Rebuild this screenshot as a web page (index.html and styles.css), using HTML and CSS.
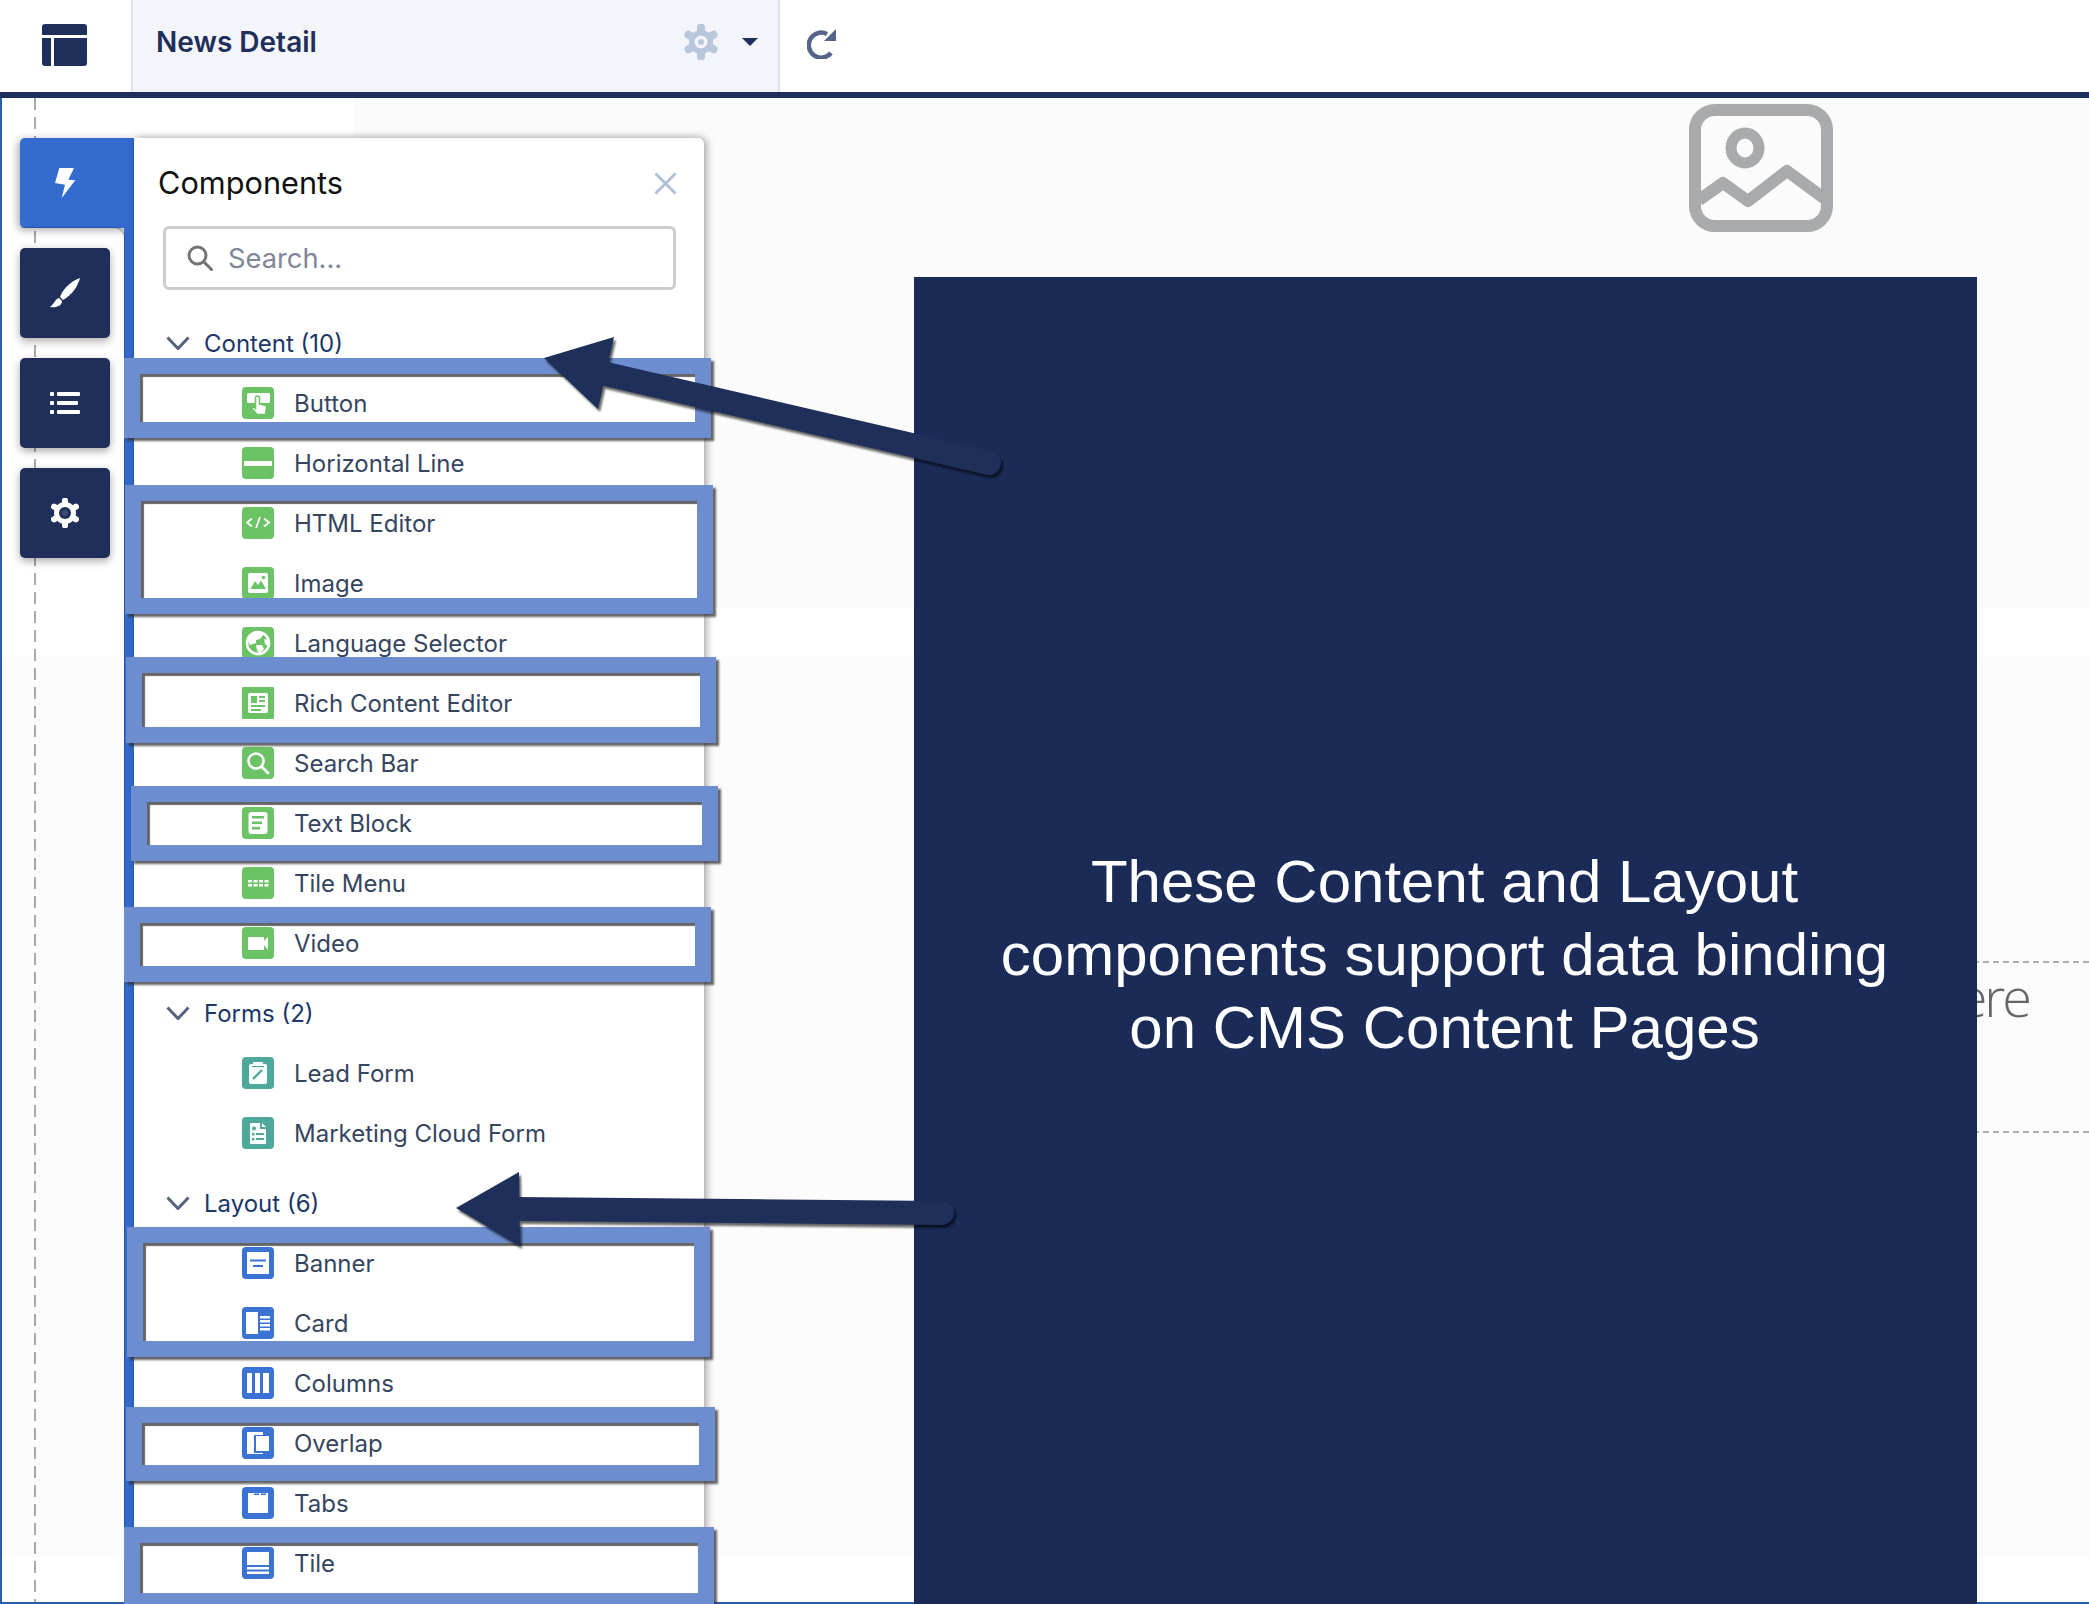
FILE: index.html
```html
<!DOCTYPE html>
<html lang="en">
<head>
<meta charset="utf-8">
<title>News Detail</title>
<link rel="stylesheet" href="styles.css">
</head>
<body>
<div class="page">
  <header class="topbar">
    <div class="brand">
      <svg class="logo" viewBox="0 0 45 42"><path d="M3 0H42A3 3 0 0 1 45 3V11H0V3A3 3 0 0 1 3 0ZM0 14H9V42H3A3 3 0 0 1 0 39ZM12 14H45V39A3 3 0 0 1 42 42H12Z"/></svg>
    </div>
    <div class="tab">
      <span class="tab-title">News Detail</span>
      <svg class="tab-gear" viewBox="-17 -18 34 36"><circle r="12" class="g-b"/><g class="g-t"><path d="M0 0V-14.500"/><path d="M0 0L12.500 -7.200"/><path d="M0 0L12.500 7.200"/><path d="M0 0V14.500"/><path d="M0 0L-12.500 7.200"/><path d="M0 0L-12.500 -7.200"/></g><circle r="6.500" class="g-h"/><circle r="3" class="g-b"/></svg>
      <span class="caret"></span>
    </div>
    <div class="refresh">
      <svg class="refresh-icon" viewBox="0 0 30 30"><path d="M24 24A12.500 12.500 0 1 1 20 5" class="r-s"/><path d="M29 0V12H17Z" class="r-f"/></svg>
    </div>
  </header>

  <main class="canvas">
    <section class="hero">
      <svg class="placeholder" viewBox="0 0 144 128"><rect x="6" y="6" width="132" height="116" rx="20"/><ellipse cx="56" cy="44" rx="14" ry="15"/><path d="M10 96L34 79L59 97L98 67L136 95"/></svg>
    </section>
    <div class="band"></div>
    <section class="body-region">
      <div class="dropzone"><span class="drop-text">ere</span></div>
    </section>
    <div class="band-end"></div>
  </main>

  <div class="builder">
    <nav class="rail">
      <div class="rail-active">
        <svg class="ic-bolt" viewBox="0 0 21 30"><path d="M4.300 0H19L13.300 11.700L20.300 12.300L6.700 30L10 16.700L0 15Z"/></svg>
      </div>
      <div class="rail-stack">
        <div class="rail-inner">
          <div class="rail-btn"><svg class="ic-brush" viewBox="0 0 30 30"><path d="M30 0C24 2 14 8 10 19L13 22C22 17 28 8 30 0Z"/><path d="M9 20C5 21 5 25 0 29C6 30 12 28 12 23Z"/></svg></div>
          <div class="rail-btn"><svg class="ic-list" viewBox="0 0 30 22"><rect y="0" width="4" height="4" rx="1"/><rect x="7" y="0" width="23" height="4" rx="1"/><rect y="9" width="4" height="4" rx="1"/><rect x="7" y="9" width="21" height="4" rx="1"/><rect y="18" width="4" height="4" rx="1"/><rect x="7" y="18" width="23" height="4" rx="1"/></svg></div>
          <div class="rail-btn"><svg class="ic-gear" viewBox="-14 -15 28 30"><circle r="11"/><g class="w-t"><path d="M0 0V-12.500"/><path d="M0 0L11 -6.300"/><path d="M0 0L11 6.300"/><path d="M0 0V12.500"/><path d="M0 0L-11 6.300"/><path d="M0 0L-11 -6.300"/></g><circle r="6" class="hole"/><circle r="3" class="core"/></svg></div>
        </div>
      </div>
    </nav>

    <aside class="panel">
      <div class="panel-head">
        <h2 class="panel-title">Components</h2>
        <svg class="close" viewBox="0 0 23 23"><path d="M1.500 1.500L21.500 21.500M21.500 1.500L1.500 21.500"/></svg>
      </div>
      <div class="search">
        <svg class="search-icon" viewBox="0 0 26 26"><circle cx="10.500" cy="10.500" r="8.500"/><path d="M17 17L24.500 24.500"/></svg>
        <span class="search-ph">Search...</span>
      </div>

      <div class="group">
        <svg class="chev" viewBox="0 0 24 14"><path d="M1.500 1.500L12 12.500L22.500 1.500"/></svg><span>Content (10)</span>
      </div>
      <ul class="items">
        <li class="item"><svg class="ico green" viewBox="0 0 32 32"><rect class="bg" width="32" height="32" rx="4"/><rect class="w" x="5" y="6" width="23" height="10" rx="1.500"/><path class="hand" d="M13.500 11a2 2 0 0 1 4 0v6l5.500 1.200a2 2 0 0 1 1.500 2.200L23.500 27.500H15L10 21.500l1.500-1.500 2 1.500Z"/></svg><span>Button</span></li>
        <li class="item"><svg class="ico green" viewBox="0 0 32 32"><rect class="bg" width="32" height="32" rx="4"/><rect class="w" x="2" y="14" width="28" height="5"/></svg><span>Horizontal Line</span></li>
        <li class="item"><svg class="ico green" viewBox="0 0 32 32"><rect class="bg" width="32" height="32" rx="4"/><path class="wl" d="M10 11.500L5 15.500L10 19.500M22 11.500L27 15.500L22 19.500M18 10L14 21"/></svg><span>HTML Editor</span></li>
        <li class="item"><svg class="ico green" viewBox="0 0 32 32"><rect class="bg" width="32" height="32" rx="4"/><rect class="w" x="6" y="6" width="20" height="20" rx="2"/><path class="g" d="M8.500 22L13 14L16 18L19 13.500L24 22Z"/><circle class="g" cx="21.500" cy="10.500" r="1.800"/></svg><span>Image</span></li>
        <li class="item"><svg class="ico green" viewBox="0 0 32 32"><rect class="bg" width="32" height="32" rx="4"/><circle class="wl2" cx="16" cy="16" r="11"/><path class="w" d="M9 8L16 5L22 7L18 12L14 13L14 16L8 18L6 14Z"/><path class="w" d="M14 18L20 18L22 22L17 27L15 23Z"/><path class="w" d="M22 12L27 13L27 20L23 17Z"/></svg><span>Language Selector</span></li>
        <li class="item"><svg class="ico green" viewBox="0 0 32 32"><rect class="bg" width="32" height="32" rx="1"/><rect class="w" x="6" y="6" width="20" height="20" rx="2"/><rect class="g" x="9" y="9" width="6" height="7"/><rect class="g" x="17" y="9" width="6" height="2"/><rect class="g" x="17" y="13" width="6" height="2"/><rect class="g" x="9" y="18" width="14" height="2"/><rect class="g" x="9" y="22" width="10" height="2"/></svg><span>Rich Content Editor</span></li>
        <li class="item"><svg class="ico green" viewBox="0 0 32 32"><rect class="bg" width="32" height="32" rx="4"/><circle class="wl2" cx="14" cy="14" r="7.500"/><path class="wl2" d="M19.500 19.500L26 26"/></svg><span>Search Bar</span></li>
        <li class="item"><svg class="ico green" viewBox="0 0 32 32"><rect class="bg" width="32" height="32" rx="4"/><rect class="w" x="6.500" y="5" width="19" height="22" rx="3"/><rect class="g" x="10" y="9" width="12" height="2.500"/><rect class="g" x="10" y="14.500" width="10" height="2.500"/><rect class="g" x="10" y="20" width="8" height="2.500"/></svg><span>Text Block</span></li>
        <li class="item"><svg class="ico green" viewBox="0 0 32 32"><rect class="bg" width="32" height="32" rx="4"/><path class="w" d="M6 13h4v2.500H6ZM11.500 13h4v2.500h-4ZM17 13h4v2.500h-4ZM22.500 13h4v2.500h-4ZM6 17h4v2.500H6ZM11.500 17h4v2.500h-4ZM17 17h4v2.500h-4ZM22.500 17h4v2.500h-4Z"/></svg><span>Tile Menu</span></li>
        <li class="item"><svg class="ico green" viewBox="0 0 32 32"><rect class="bg" width="32" height="32" rx="4"/><rect class="w" x="6" y="10" width="16" height="13" rx="1"/><path class="w" d="M20 16L26 10V23Z"/></svg><span>Video</span></li>
      </ul>

      <div class="group group-next">
        <svg class="chev" viewBox="0 0 24 14"><path d="M1.500 1.500L12 12.500L22.500 1.500"/></svg><span>Forms (2)</span>
      </div>
      <ul class="items">
        <li class="item"><svg class="ico teal" viewBox="0 0 32 32"><rect class="bg" width="32" height="32" rx="4"/><rect class="w" x="7" y="7" width="18" height="20" rx="2"/><rect class="w" x="11" y="5" width="10" height="4" rx="1"/><rect class="t" x="10" y="9" width="12" height="1.200"/><path class="tl" d="M11 22L20 13"/></svg><span>Lead Form</span></li>
        <li class="item"><svg class="ico teal" viewBox="0 0 32 32"><rect class="bg" width="32" height="32" rx="4"/><path class="w" d="M9 6H18V12H24V26A1 1 0 0 1 23 27H9A1 1 0 0 1 8 26V7A1 1 0 0 1 9 6ZM20 6L24 10H20Z"/><circle class="t" cx="12" cy="11.500" r="2"/><rect class="t" x="10" y="16" width="2.500" height="2.500"/><rect class="t" x="14" y="16" width="8" height="2"/><rect class="t" x="10" y="21" width="2.500" height="2.500"/><rect class="t" x="14" y="21" width="8" height="2"/></svg><span>Marketing Cloud Form</span></li>
      </ul>

      <div class="group group-next">
        <svg class="chev" viewBox="0 0 24 14"><path d="M1.500 1.500L12 12.500L22.500 1.500"/></svg><span>Layout (6)</span>
      </div>
      <ul class="items">
        <li class="item"><svg class="ico blue" viewBox="0 0 32 32"><rect class="bg" width="32" height="32" rx="4"/><rect class="w" x="5" y="5" width="22" height="22"/><rect class="b" x="8" y="12.500" width="16" height="2"/><rect class="b" x="11" y="18" width="10" height="2"/></svg><span>Banner</span></li>
        <li class="item"><svg class="ico blue" viewBox="0 0 32 32"><rect class="bg" width="32" height="32" rx="4"/><rect class="w" x="4" y="5" width="12" height="22"/><rect class="w" x="18" y="9" width="10" height="2.500"/><rect class="w" x="18" y="13" width="10" height="2.500"/><rect class="w" x="18" y="17" width="10" height="2.500"/><rect class="w" x="18" y="21" width="10" height="2.500"/></svg><span>Card</span></li>
        <li class="item"><svg class="ico blue" viewBox="0 0 32 32"><rect class="bg" width="32" height="32" rx="4"/><rect class="w" x="5" y="6" width="5" height="20"/><rect class="w" x="13" y="6" width="5" height="20"/><rect class="w" x="21" y="6" width="6" height="20"/></svg><span>Columns</span></li>
        <li class="item"><svg class="ico blue" viewBox="0 0 32 32"><rect class="bg" width="32" height="32" rx="4"/><rect class="w" x="5" y="5" width="16" height="22"/><rect class="b" x="12" y="8" width="17" height="18"/><rect class="w" x="14" y="9" width="13" height="15"/></svg><span>Overlap</span></li>
        <li class="item"><svg class="ico blue" viewBox="0 0 32 32"><rect class="bg" width="32" height="32" rx="4"/><rect class="w" x="6" y="6" width="20" height="20"/><rect class="b" x="12" y="6.500" width="5" height="1.500"/><rect class="b" x="19" y="6.500" width="5" height="1.500"/></svg><span>Tabs</span></li>
        <li class="item"><svg class="ico blue" viewBox="0 0 32 32"><rect class="bg" width="32" height="32" rx="4"/><rect class="w" x="5" y="5" width="22" height="13"/><rect class="w" x="5" y="20" width="22" height="2.500"/><rect class="w" x="5" y="24.500" width="22" height="2.500"/></svg><span>Tile</span></li>
      </ul>
    </aside>
  </div>

  <div class="hl hl-1"></div>
  <div class="hl hl-2"></div>
  <div class="hl hl-3"></div>
  <div class="hl hl-4"></div>
  <div class="hl hl-5"></div>
  <div class="hl hl-6"></div>
  <div class="hl hl-7"></div>
  <div class="hl hl-8"></div>

  <div class="note">These Content and Layout<br>components support data binding<br>on CMS Content Pages</div>

  <svg class="arrows" viewBox="0 0 2089 1604">
    <path class="shaft" d="M606 374L989 463"/>
    <path class="head" d="M544 358L614 337L598 409Z"/>
    <path class="shaft" d="M515 1209L942 1213"/>
    <path class="head" d="M456 1208L519 1172L520 1246Z"/>
  </svg>
</div>
</body>
</html>
```
FILE: styles.css
```css
* { box-sizing: border-box; }
html, body { margin: 0; padding: 0; background: #fff; }
.page {
  position: relative;
  width: 2089px;
  height: 1604px;
  overflow: hidden;
  font-family: Inter, "Liberation Sans", sans-serif;
}

/* top bar */
.topbar {
  display: flex;
  height: 98px;
  border-bottom: 6px solid #1f2f5c;
  background: #fff;
}
.brand { width: 131px; padding: 24px 0 0 42px; }
.logo { display: block; width: 45px; height: 42px; fill: #1f2f5c; }
.tab {
  display: flex;
  align-items: center;
  width: 649px;
  background: #f3f5fa;
  border-left: 2px solid #e0e3e8;
  border-right: 2px solid #e0e3e8;
  padding: 0 20px 8px 23px;
}
.tab-title { flex: 1; font-size: 28px; font-weight: 600; color: #1f2f5c; }
.tab-gear { width: 34px; height: 36px; margin-right: 24px; }
.g-b { fill: #b8c7db; }
.g-t path { stroke: #b8c7db; stroke-width: 8; fill: none; stroke-linecap: round; }
.g-h { fill: #f3f5fa; }
.caret { width: 0; height: 0; border-style: solid; border-width: 8px 8px 0; border-color: #1f2f5c transparent transparent; }
.refresh { padding: 29px 0 0 27px; }
.refresh-icon { display: block; width: 30px; height: 30px; }
.r-s { fill: none; stroke: #55658a; stroke-width: 4.500; }
.r-f { fill: #55658a; }

/* canvas */
.canvas {
  position: relative;
  height: 1506px;
  border-left: 2px solid #2a5cb0;
  border-bottom: 2px solid #2a5cb0;
  display: flex;
  flex-direction: column;
}
.canvas::before {
  content: "";
  position: absolute;
  left: 32px;
  top: 0;
  bottom: 0;
  width: 2px;
  background: repeating-linear-gradient(to bottom, #aaa 0, #aaa 12px, transparent 12px, transparent 19px);
}
.hero {
  display: flex;
  justify-content: flex-end;
  height: 510px;
  padding: 6px 256px 0 0;
  background: linear-gradient(to right, #fff 352px, #fbfbfb 352px);
}
.placeholder { width: 144px; height: 128px; fill: none; stroke: #a9aaab; stroke-width: 12; stroke-linejoin: round; }
.placeholder ellipse { stroke-width: 11; }
.band { height: 49px; background: #fff; }
.body-region { height: 901px; padding-top: 304px; background: #fcfcfc; }
.dropzone {
  display: flex;
  align-items: flex-start;
  justify-content: flex-end;
  height: 172px;
  padding: 3px 60px 0 0;
  margin-left: 1000px;
  border-top: 2px dashed #b0aeaa;
  border-bottom: 2px dashed #b0aeaa;
}
.drop-text { font-family: "Open Sans", sans-serif; font-weight: 300; font-size: 54px; letter-spacing: -3px; line-height: 60px; color: #666; white-space: nowrap; }
.band-end { flex: 1; background: #fff; }

/* floating builder */
.builder {
  position: absolute;
  left: 20px;
  top: 138px;
  bottom: 0;
  width: 684px;
  display: flex;
}
.rail { width: 114px; display: flex; flex-direction: column; flex: none; }
.rail-active {
  display: flex;
  align-items: center;
  justify-content: center;
  height: 90px;
  padding-right: 24px;
  background: #336bcf;
  border-radius: 5px 0 0 5px;
  box-shadow: -2px 2px 8px rgba(0,0,0,.35);
}
.ic-bolt { width: 21px; height: 30px; fill: #fff; }
.rail-stack { flex: 1; border-right: 10px solid #336bcf; }
.rail-inner {
  height: 100%;
  display: flex;
  flex-direction: column;
  gap: 20px;
  padding-top: 20px;
  border-top-right-radius: 10px;
  box-shadow: 1px -1px 1px rgba(0,0,0,.25);
}
.rail-btn {
  display: flex;
  align-items: center;
  justify-content: center;
  width: 90px;
  height: 90px;
  background: #1f2f5a;
  border-radius: 5px;
  box-shadow: 0 3px 8px rgba(0,0,0,.35);
}
.ic-brush { width: 30px; height: 30px; fill: #fff; }
.ic-list { width: 30px; height: 22px; fill: #fff; }
.ic-gear { width: 28px; height: 30px; fill: #fff; }
.w-t path { stroke: #fff; stroke-width: 6; fill: none; stroke-linecap: round; }
.ic-gear .hole { fill: #1f2f5a; }
.ic-gear .core { fill: #3d4d73; }

.panel {
  flex: 1;
  background: #fff;
  border-radius: 0 6px 0 0;
  box-shadow: 2px 0 8px rgba(0,0,0,.4);
  padding-top: 20px;
  position: relative;
}
.panel-head { display: flex; align-items: center; justify-content: space-between; height: 50px; padding: 0 27px 0 24px; }
.panel-title { margin: 0 0 2px; font-size: 30.700px; font-weight: 400; color: #111; }
.close { width: 23px; height: 23px; fill: none; stroke: #b0c0d6; stroke-width: 3; }
.search {
  display: flex;
  align-items: center;
  gap: 15px;
  height: 64px;
  margin: 18px 28px 23px 29px;
  padding-left: 21px;
  border: 3px solid #cdcdcd;
  border-radius: 6px;
}
.search-icon { width: 26px; height: 26px; fill: none; stroke: #747474; stroke-width: 3; stroke-linecap: round; }
.search-ph { font-size: 27.300px; color: #7d8796; }
.group {
  display: flex;
  align-items: center;
  gap: 14px;
  height: 60px;
  padding-left: 32px;
  font-size: 24px;
  color: #1b3668;
}
.group-next { margin-top: 10px; }
.chev { width: 24px; height: 14px; fill: none; stroke: #56617f; stroke-width: 3; }
.items { list-style: none; margin: 0; padding: 0; }
.item {
  display: flex;
  align-items: center;
  gap: 20px;
  height: 60px;
  padding-left: 108px;
  font-size: 24px;
  color: #36455f;
}
.ico { width: 32px; height: 32px; flex: none; }
.green .bg { fill: #6cc365; }
.teal .bg { fill: #4fa99b; }
.blue .bg { fill: #3a73d3; }
.w { fill: #fff; }
.wl { fill: none; stroke: #fff; stroke-width: 1.800; }
.wl2 { fill: none; stroke: #fff; stroke-width: 2.600; stroke-linecap: round; }
.g { fill: #6cc365; }
.t { fill: #4fa99b; }
.tl { fill: none; stroke: #4fa99b; stroke-width: 2.400; }
.b { fill: #3a73d3; }
.hand { fill: #fff; stroke: #6cc365; stroke-width: 1.500; }

/* annotation overlays */
.hl {
  position: absolute;
  border: 16px solid #6d8dd1;
  box-shadow: 3px 3px 2px rgba(50,50,50,.75), inset 3px 3px 1px rgba(50,50,50,.75);
}
.hl-1 { left: 124px; top: 358px; width: 587px; height: 80px; }
.hl-2 { left: 125px; top: 485px; width: 588px; height: 129px; }
.hl-3 { left: 126px; top: 657px; width: 590px; height: 86px; }
.hl-4 { left: 131px; top: 786px; width: 587px; height: 75px; }
.hl-5 { left: 124px; top: 907px; width: 587px; height: 75px; }
.hl-6 { left: 127px; top: 1227px; width: 583px; height: 130px; }
.hl-7 { left: 126px; top: 1407px; width: 589px; height: 74px; }
.hl-8 { left: 124px; top: 1527px; width: 590px; height: 82px; }

.note {
  position: absolute;
  left: 914px;
  top: 277px;
  width: 1063px;
  bottom: 0;
  padding: 568px 2px 0 0;
  background: #1a2b58;
  color: #fff;
  text-align: center;
  font-family: "Liberation Sans", Arial, sans-serif;
  font-size: 60px;
  line-height: 73px;
}

.arrows { position: absolute; left: 0; top: 0; width: 2089px; height: 1604px; filter: drop-shadow(2px 3px 1px rgba(0,0,0,.6)); }
.shaft { fill: none; stroke: #1e2f5a; stroke-width: 24; stroke-linecap: round; }
.head { fill: #1e2f5a; }
```
